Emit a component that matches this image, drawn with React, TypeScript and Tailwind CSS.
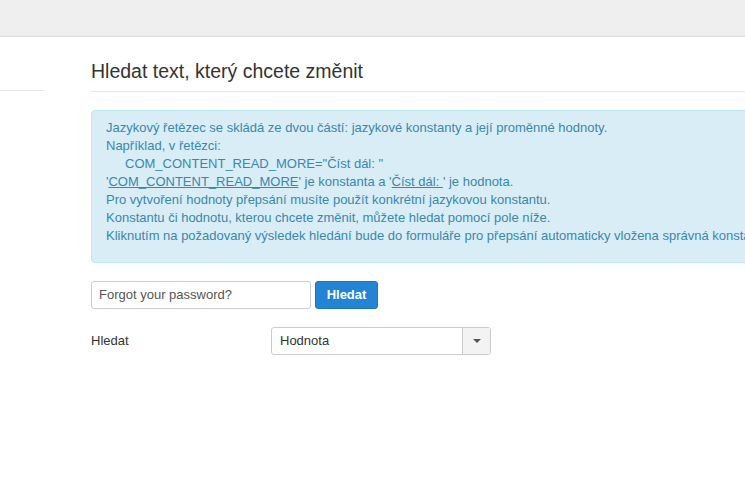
const lines = [
  'Jazykový řetězec se skládá ze dvou částí: jazykové konstanty a její proměnné hodnoty.',
  'Například, v řetězci:',
];

export default function App() {
  return (
    <div className="w-[745px] h-[487px] overflow-hidden bg-white font-['Liberation_Sans',Arial,sans-serif] text-[13px] text-[#333]">
      <div className="h-[37px] bg-[#efefef] border-b border-[#dcdcdc]" />
      <div className="flex">
        <div className="w-[44px] shrink-0">
          <div className="h-[54px] border-b border-[#e5e5e5]" />
        </div>
        <div className="ml-[47px] w-[900px] shrink-0">
          <h1 className="mt-[22px] pb-[8px] border-b border-[#e5e5e5] text-[19.5px] leading-[24px] text-[#333]">
            Hledat text, který chcete změnit
          </h1>
          <div className="mt-[18px] h-[153px] rounded-[4px] border border-[#bce8f1] bg-[#d9edf7] pl-[14px] pt-[8px] text-[#3a87ad] leading-[18px] whitespace-nowrap">
            {lines.map((l) => (
              <div key={l}>{l}</div>
            ))}
            <div className="pl-[19px]">COM_CONTENT_READ_MORE="Číst dál: "</div>
            <div>
              '<span className="underline">COM_CONTENT_READ_MORE</span>' je konstanta a '
              <span className="underline">Číst dál: </span>' je hodnota.
            </div>
            <div>Pro vytvoření hodnoty přepsání musíte použít konkrétní jazykovou konstantu.</div>
            <div>Konstantu či hodnotu, kterou chcete změnit, můžete hledat pomocí pole níže.</div>
            <div>
              Kliknutím na požadovaný výsledek hledání bude do formuláře pro přepsání automaticky vložena správná konstanta.
            </div>
          </div>
          <div className="mt-[18px] flex items-center gap-[4px]">
            <div className="flex h-[28px] w-[220px] items-center rounded-[3px] border border-[#ccc] px-[7px] text-[#555]">
              Forgot your password?
            </div>
            <button className="h-[28px] w-[63px] rounded-[3px] border border-[#1f74bf] bg-[#2384d3] text-[13px] font-bold text-white">
              Hledat
            </button>
          </div>
          <div className="mt-[18px] flex items-center">
            <div className="w-[180px]">Hledat</div>
            <div className="flex h-[28px] w-[220px] items-stretch rounded-[3px] border border-[#ccc]">
              <div className="flex flex-1 items-center px-[8px] text-[#333]">Hodnota</div>
              <div className="flex w-[28px] items-center justify-center border-l border-[#ccc] bg-[#f3f3f3]">
                <svg width="8" height="4" viewBox="0 0 8 4">
                  <path d="M0 0h8L4 4z" fill="#555" />
                </svg>
              </div>
            </div>
          </div>
        </div>
      </div>
    </div>
  );
}
